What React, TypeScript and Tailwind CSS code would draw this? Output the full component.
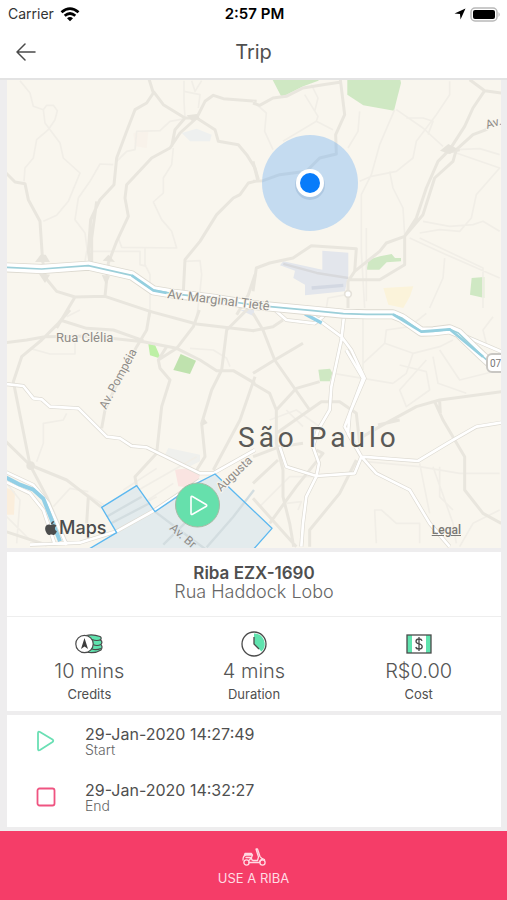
import { FaApple } from 'react-icons/fa';

// The map is drawn in four tiles, three drawing units to a pixel
const tiles = [
  {
    origin: 'translate(0 0)',
    minor: [
      'M60 8L90 45L100 85L130 95L140 82L160 82L172 98L165 125L145 155L110 185L100 240L75 270L72 310',
      'M130 95L135 135L180 195L190 240L240 285L205 370L170 412L130 430',
      'M340 260L300 258L270 310L235 360L225 425L255 465L262 520',
      'M350 250L380 220L405 215L410 160L480 158L510 130L555 122',
      'M520 210L515 260L490 300L490 345L460 372L485 425L515 460L530 510L365 508L355 480',
      'M555 120L552 70L552 8M552 40L600 50L595 90M575 8L585 40L605 8',
      'M255 550L260 520L420 520L420 560L440 565M435 510L435 560L450 590L450 716',
      'M555 550L600 548L605 590L600 640L590 720',
    ],
    major: [
      'M18 285L45 312L75 317L85 365L120 430L128 550L137 600L170 640L225 657L315 655L450 700L590 738L762 758',
      'M443 -10L460 45L440 75L405 95L380 160L350 240L342 320L300 365L272 425L265 520L270 555M290 370L275 480L275 560',
      'M460 40L490 80L555 120L590 120L645 155L655 190L715 200L740 230L765 270L775 305',
      'M770 70L670 62L640 52L615 70L590 120L540 165L510 210L455 240L380 320L375 360L385 415L350 490L325 555L315 655',
      'M555 120L525 155L515 205M765 310L745 315L720 350L700 360L650 410L600 490L555 545L550 640',
      'M225 657L170 750M765 590L745 650L710 710',
    ],
    white: [],
  },
  {
    origin: 'translate(759 0)',
    minor: [
      'M0 70L40 105L35 160L60 215M155 50L195 115L190 130L240 155M190 130L90 190M175 20L195 60L185 100',
      'M320 100L315 160L285 210M425 95L380 200L355 290L325 350L325 520L335 690',
      'M430 95L510 150L570 205M460 120L510 120L540 130L525 170M590 10L590 50L550 110L490 190L480 240L430 280L355 295L320 310',
      'M410 280L420 330L450 390L455 470M610 215L680 212L740 230M610 225L740 270L670 350L655 420L620 460L560 455L500 465',
      'M510 430L590 445L660 440L690 430L740 460M470 480L580 530L740 600M500 480L690 570L690 690',
      'M575 540L570 600L530 690M340 450L340 670M220 690L225 660L280 650',
    ],
    major: [
      'M0 310L30 308L80 290L160 280L200 240L250 228L248 170L275 110L262 5M0 250L15 310',
      'M0 75L20 82L60 60L100 55L150 30L210 20L265 12',
      'M650 5L695 38L745 45M695 38L660 90L635 145L590 215L555 250L520 330L490 420L455 475L400 495L380 520L305 580L285 610L285 690',
      'M720 130L700 155L660 170L610 215L600 250L545 300L510 410L455 475M575 225L620 215',
      'M455 475L455 560L380 605L285 605M0 640L10 570L50 555L120 540L175 503L310 512L305 580',
    ],
    white: [],
  },
  {
    origin: 'translate(0 696)',
    minor: [
      'M90 115L150 132L225 132L225 95M200 310L190 330L130 340L130 400L110 455M160 590L210 535L265 545',
      'M570 115L640 120L680 145L690 170M240 540L320 590M370 540L470 475M380 560L590 440M405 595L520 520',
      'M340 630L470 560M200 20L240 0M20 520L60 570L50 700M0 600L90 690',
    ],
    major: [
      'M18 98L80 90L135 80L270 78L430 95L530 115L600 150L650 182L700 182L765 220M180 30L260 55L340 60L430 92',
      'M210 0L175 40L125 90L65 140L40 215L90 465L140 560L200 700M18 395L90 465L200 510L265 560L305 592M265 560L260 640',
      'M450 0L440 60L410 110L340 245L315 300L305 355M598 0L580 50L530 115L475 150L480 175L510 210L485 290L470 430L405 500L410 530',
      'M762 -20L740 0L680 60L665 180L635 240L605 340L615 440L590 480M765 200L720 330L640 480',
      'M18 665L140 705M475 150L500 110',
    ],
    white: [
      'M18 222L70 228L100 265L125 268L150 290L235 295L320 380L360 385L395 408L440 412L600 490L640 490L765 420',
      'M90 704L240 698L350 664L465 600L600 510',
      'M15 485L100 525L145 580L200 705M15 515L90 550L130 600L165 705',
    ],
  },
  {
    origin: 'translate(759 696)',
    minor: [
      'M330 160L395 100L400 60L470 50L520 10M395 100L480 130L460 190L420 220M480 130L560 110L600 90M440 165L520 185L530 240L460 290L440 240L520 150',
      'M240 190L420 220M560 120L620 210L740 180M540 140L555 220L640 250M720 20L690 60L700 100',
      'M340 455L500 470L620 490L740 490M500 460L530 610M540 470L600 640L610 700M560 470L560 560L600 600',
      'M370 700L365 600L385 600L430 640L500 640L500 700M100 580L145 575L135 600M620 710L660 640L740 600',
      'M100 300L150 350M50 330L130 300L200 350M330 20L330 180M20 590L110 500L190 500',
    ],
    major: [
      'M0 10L30 60L65 150L170 300M0 190L65 150L150 100M0 62L60 50L90 30M0 220L50 250L70 300L130 235L200 215M70 300L70 400L90 480L90 560L110 640L122 710',
      'M0 440L80 410L150 400M70 370L205 275L260 275L310 310L320 400M0 520L75 450M50 640L130 530L210 430L190 420',
      'M170 710L170 660L260 550L310 450M320 385L380 350L490 290L560 270L745 245M375 345L440 330',
      'M545 275L570 330L635 440L635 540L690 610L745 640M560 275L562 310M0 565L130 710',
    ],
    white: [
      'M275 0L265 90L235 230L230 300L195 360L180 410L198 460L190 500L160 560L150 640L145 710',
      'M150 -5L265 80L295 120L335 205L290 310L285 370L325 440L305 490L190 498L100 470L80 410M280 120L330 205L275 350L325 440',
      'M325 440L495 453L600 390L670 350L745 338M325 440L370 490L470 540L530 640L590 710M60 -5L100 30L185 40L210 20L230 0',
      'M640 80L745 125',
    ],
  },
];

const highway =
  'M15 568L125 573L265 563L395 592L460 637L520 647L640 662L759 681L939 698L1030 707L1100 709L1179 709L1205 720L1264 761L1300 760L1349 754L1375 765L1449 836L1470 855';
const zone = 'M305 1288L410 1223L465 1301L590 1216L645 1188L816 1351L755 1420L262 1416L350 1364Z';

const TripMap = () => (
  <svg viewBox="0 0 494 468" className="block w-full bg-[#f9f6ee]" role="img" aria-label="Trip map">
    <g transform="translate(-7 2) scale(0.33333) translate(0 -12)" fill="none" strokeLinejoin="round">
      {/* Parks and blocks */}
      <g fill="#cfe8c3">
        <path d="M815 0L845 58L870 45L910 25L955 8L960 0Z" />
        <path d="M1042 0L1042 50L1090 82L1182 98L1203 15L1200 0Z" />
        <path d="M1100 575L1105 545L1140 535L1175 528L1185 540L1203 540L1203 550L1160 553L1138 575Z" />
        <path d="M1415 600L1453 597L1453 660L1410 650Z" />
        <path d="M955 875L990 872L997 885L990 910L960 910Z" />
      </g>
      <path d="M445 797L465 800L483 842L450 832Z" fill="#bdf0a5" />
      <path d="M542 828L588 848L570 888L520 876Z" fill="#bfe2ae" />
      <g fill="#e3e6ec">
        <path d="M967 518L1045 524L1045 590L1035 640L915 652L915 620L880 600L885 578L840 562L850 550L967 575Z" />
        <path d="M545 165L590 152L635 170L630 190L570 190Z" fill="#eef0ef" />
        <path d="M505 1110L600 1130L600 1150L570 1165L495 1130Z" fill="#eff0ed" />
        <path d="M720 696L762 696L762 715Z" />
      </g>
      <path d="M850 558L950 585L1045 600" stroke="#d8d9dc" strokeWidth="7" />
      <path d="M935 630L1030 622" stroke="#d3d8e2" strokeWidth="10" />
      <path d="M1150 630L1240 625L1230 655L1210 690L1165 680Z" fill="#fbf3da" />
      <path d="M525 1175L570 1170L600 1192L585 1230L535 1225Z" fill="#fae4e1" />
      <path d="M21 1230L45 1240L42 1310L21 1310Z" fill="#fbeedc" />
      <path d="M400 165L445 160L440 210L405 205Z" fill="#f8f2ea" />

      {tiles.map((tile) => (
        <g key={tile.origin} transform={tile.origin}>
          <path d={tile.minor.join('')} stroke="#f1eee7" strokeWidth="5" />
          <path d={tile.major.join('')} stroke="#e9e6de" strokeWidth="9" />
        </g>
      ))}
      <g fill="#e7e4dc">
        <path d="M105 552L150 552L137 530L122 530ZM115 585L150 590L135 615ZM308 548L345 552L325 530ZM305 590L330 595L318 620Z" />
        <path d="M560 112L590 108L600 122L575 128ZM1320 218L1345 198L1372 212L1350 228Z" />
        <circle cx="92" cy="1163" r="13" />
        <path d="M603 1045L623 1035L613 1022Z" />
      </g>

      {/* Service zone */}
      <path d={zone} fill="#dfe9ed" fillOpacity="0.88" />
      <g stroke="#d3dde0" strokeWidth="7">
        <path d="M320 1316L425 1256M335 1335L450 1275M465 1301L530 1350L620 1416M560 1330L490 1400M762 1236L700 1316L620 1408" />
      </g>

      {tiles.map((tile) => (
        <g key={tile.origin} transform={tile.origin}>
          <path d={tile.white.join('')} stroke="#dedbd3" strokeWidth="12" />
          <path d={tile.white.join('')} stroke="#ffffff" strokeWidth="8" />
        </g>
      ))}
      <path d={zone} stroke="#5cb8f0" strokeWidth="4" />

      {/* Rivers and the highway along them */}
      <path d="M15 1197L60 1220L100 1235L130 1262L145 1300L180 1390" stroke="#92cfe6" strokeWidth="12" />
      <path d="M915 708L965 735" stroke="#92cfe6" strokeWidth="10" />
      <path d={highway} stroke="#dcd9d0" strokeWidth="30" />
      <path d={highway} stroke="#ffffff" strokeWidth="25" />
      <path d={highway} stroke="#9ccfd9" strokeWidth="5" />
      <path d="M395 592L460 637L500 645M1179 709L1264 761L1349 754L1449 836" stroke="#94cfdf" strokeWidth="8" />
      <circle cx="1044" cy="648" r="10" stroke="#e5e2da" strokeWidth="5" fill="#ffffff" />
    </g>

    {/* Street and city names */}
    <g
      className="font-['Roboto',sans-serif] text-[13px]"
      fill="#8f8c88"
      stroke="#f9f6ee"
      strokeWidth="2"
      paintOrder="stroke"
    >
      <text transform="translate(160 218) rotate(7)">Av. Marginal Tietê</text>
      <text x="49" y="262">Rua Clélia</text>
      <text transform="translate(99 330) rotate(-62)" className="text-xs">Av. Pompéia</text>
      <text transform="translate(214 412) rotate(-44)" className="text-xs">Augusta</text>
      <text transform="translate(480 49) rotate(-17)" className="text-xs">Av.</text>
      <text transform="translate(162 449) rotate(41)" className="text-xs" stroke="#dfe9ed">Av. Br</text>
    </g>
    <text
      x="231"
      y="367"
      className="font-['Roboto',sans-serif] text-[28px] tracking-[4px]"
      fill="#5a5956"
      stroke="#f9f6ee"
      strokeWidth="2"
      paintOrder="stroke"
    >
      São Paulo
    </text>
    <rect x="480" y="274" width="24" height="18" rx="5" fill="#ffffff" stroke="#c9c7c3" strokeWidth="2" />
    <text x="483" y="287" className="font-['Roboto',sans-serif] text-[10px]" fill="#777777">07</text>

    {/* Rider position */}
    <circle cx="303" cy="103" r="48" fill="#5ea7f2" fillOpacity="0.34" />
    <circle cx="303" cy="105" r="15" fill="#6083a8" fillOpacity="0.2" />
    <circle cx="303" cy="103" r="14" fill="#ffffff" />
    <circle cx="303" cy="103" r="10" fill="#087cfa" />

    {/* Trip start */}
    <circle cx="190.500" cy="425" r="22" fill="#66e0ac" stroke="#a9b9a5" strokeWidth="1" />
    <path d="M184 417.5V433.5Q184 435 185.500 434.200L199 426.500Q200.500 425.500 199 424.500L185.500 416.500Q184 416 184 417.500Z" fill="none" stroke="#ffffff" strokeWidth="1.6" />
  </svg>
);

const CreditsIcon = () => (
  <svg viewBox="0 0 28 20" className="h-5 w-7" fill="#5fe3ae" stroke="#4a4a4a" strokeWidth="1.2">
    <path d="M11 1.500Q18 0 25 2.500Q27 3.500 25.500 6Q28 8 26 10.500Q28 13 26 16Q20 20 11 18Z" />
    <path d="M17 5.500Q22 7.500 26 5.500M18 10.500Q22 12.500 26 10.500M17 15Q21 16.500 26 14.500" fill="none" />
    <circle cx="9.500" cy="10" r="8.700" fill="#ffffff" />
    <path d="M9.500 4L13 15L9.500 12.500L6 15Z" fill="#3d3d3d" stroke="none" />
  </svg>
);

const DurationIcon = () => (
  <svg viewBox="0 0 26 26" className="h-[26px] w-[26px]" stroke="#4a4a4a" strokeWidth="1.300">
    <circle cx="13" cy="13" r="12" fill="#ffffff" />
    <path d="M13 2.500A10.500 10.500 0 0 1 20.500 20.500L13 13Z" fill="#5fe3ae" stroke="none" />
    <path d="M13 6V13L18 18" fill="none" />
  </svg>
);

const CostIcon = () => (
  <svg viewBox="0 0 26 20" className="h-5 w-[26px]" fill="none" stroke="#4a4a4a">
    <path d="M1 1H6V19H1ZM20 1H25V19H20Z" fill="#5fe3ae" stroke="none" />
    <rect x="1" y="1" width="24" height="18" strokeWidth="1.300" />
    <path d="M16 6.800Q15.500 5 13 5Q10 5 10 7.300Q10 9.300 13 9.900Q16.200 10.500 16.200 12.700Q16.200 15 13 15Q10.200 15 9.800 13M13 3V17" strokeWidth="1.300" />
  </svg>
);

const ScooterIcon = () => (
  <svg viewBox="0 0 24 18" className="h-[18px] w-6" fill="none" stroke="#ffdbe3" strokeWidth="1.300" strokeLinejoin="round" strokeLinecap="round">
    <circle cx="4.500" cy="14.500" r="2.600" />
    <circle cx="20.500" cy="14.500" r="2.600" />
    <path d="M1 12Q1 7.500 4 7H10.500L9.500 9.500Q9 12 11 12.500H15.500L16.500 9L14 1L15.500 1L18 8.500Q19 10.500 22.500 11.500M7 14.500H17.500Q18 11.500 20.500 11.500M4 9.500H8.500M7.500 12L9.500 9.500M2.500 7L3 5.500H9.500L10.500 7" />
  </svg>
);

const stats = [
  { icon: <CreditsIcon />, value: '10 mins', label: 'Credits' },
  { icon: <DurationIcon />, value: '4 mins', label: 'Duration' },
  { icon: <CostIcon />, value: 'R$0.00', label: 'Cost' },
];

const events = [
  {
    icon: (
      <svg viewBox="0 0 20 22" className="h-[22px] w-5" fill="none" stroke="#6adfb4" strokeWidth="1.800" strokeLinejoin="round">
        <path d="M2 3Q2 1 4 2L16.500 9.500Q18 10.800 16.500 12L4 20Q2 21 2 19Z" />
      </svg>
    ),
    time: '29-Jan-2020 14:27:49',
    label: 'Start',
  },
  {
    icon: (
      <svg viewBox="0 0 20 20" className="h-5 w-5" fill="none" stroke="#ef5481" strokeWidth="1.800">
        <rect x="1.500" y="1.500" width="17" height="17" rx="2" />
      </svg>
    ),
    time: '29-Jan-2020 14:32:27',
    label: 'End',
  },
];

const App = () => {
  return (
    <div className="flex min-h-screen flex-col bg-[#eeedee] font-['Inter',sans-serif] text-[#4f4f4f]">
      {/* Status bar */}
      <header className="border-b-2 border-[#e3e3e3] bg-white">
        <div className="grid h-7 grid-cols-3 items-center pr-1.5 pl-2 text-sm text-black">
          <div className="flex items-center gap-1.5 text-[#333333]">
            Carrier
            <svg viewBox="0 0 20 15" className="h-[15px] w-5" fill="none" stroke="#000000" strokeWidth="2.800">
              <path d="M1.500 5.300Q10 -2 18.500 5.300M4.700 8.800Q10 4.300 15.300 8.800" />
              <path d="M7 11.200Q10 8.800 13 11.200L10 14.200Z" fill="#000000" stroke="none" />
            </svg>
          </div>
          <span className="text-center text-[15px] font-semibold">2:57 PM</span>
          <div className="flex items-center justify-end gap-1">
            <svg viewBox="0 0 12 12" className="h-3 w-3" fill="#000000">
              <path d="M11.500 0.500L6.500 11.500L6 6L0.500 5.500Z" />
            </svg>
            <svg viewBox="0 0 31 15" className="h-[15px] w-[31px]">
              <rect x="1" y="1" width="26" height="13" rx="4" fill="#ffffff" stroke="#b9b9b9" strokeWidth="1.500" />
              <rect x="3" y="3" width="22" height="9" rx="2" fill="#000000" />
              <path d="M28.500 5Q31 7.500 28.500 10Z" fill="#b9b9b9" />
            </svg>
          </div>
        </div>
        <div className="grid h-[50px] grid-cols-3 items-center px-4 pb-0.5">
          <button aria-label="Back" className="w-5">
            <svg viewBox="0 0 20 18" className="h-[18px] w-5" fill="none" stroke="#4a4a4a" strokeWidth="1.500" strokeLinecap="round" strokeLinejoin="round">
              <path d="M19 9H1M9 1L1 9L9 17" />
            </svg>
          </button>
          <h1 className="text-center text-xl leading-6">Trip</h1>
        </div>
      </header>

      <main className="flex flex-col gap-1 pr-1.5 pb-1 pl-[7px]">
        <div className="relative">
          <TripMap />
          <div className="absolute bottom-2 left-9 flex items-center font-medium text-[#4b4c4c]">
            <FaApple className="h-4 w-4" />
            <span className="text-lg leading-6">Maps</span>
          </div>
          <a href="#legal" className="absolute right-10 bottom-2.5 font-['Roboto',sans-serif] text-xs font-medium text-[#7b7975] underline">
            Legal
          </a>
        </div>

        {/* Vehicle and totals */}
        <section className="bg-white">
          <div className="h-[65px] border-b border-[#eeeeee] pt-3 text-center">
            <h2 className="text-[17px] leading-[18px] font-semibold">Riba EZX-1690</h2>
            <p className="text-lg leading-5 font-light text-[#666666]">Rua Haddock Lobo</p>
          </div>
          <div className="grid grid-cols-3 pb-2">
            {stats.map((stat) => (
              <div key={stat.label} className="flex flex-col items-center pt-3.5">
                <div className="flex h-[26px] items-center">{stat.icon}</div>
                <div className="text-xl leading-7 font-light text-[#555555]">{stat.value}</div>
                <div className="text-[13px] leading-[18px]">{stat.label}</div>
              </div>
            ))}
          </div>
        </section>

        {/* Start and end times */}
        <section className="bg-white">
          {events.map((event) => (
            <div key={event.label} className="flex h-14 items-center gap-7 pb-1 pl-7">
              <div className="flex w-[22px] justify-center">{event.icon}</div>
              <div>
                <div className="text-base leading-[18px]">{event.time}</div>
                <div className="text-sm leading-[14px] font-light text-[#666666]">{event.label}</div>
              </div>
            </div>
          ))}
        </section>
      </main>

      <button className="mt-auto flex h-[69px] flex-col items-center justify-center gap-0.5 bg-[#f53d68] pt-1 text-[13px] leading-5 text-[#ffdbe3]">
        <ScooterIcon />
        USE A RIBA
      </button>
    </div>
  );
};

export default App;
